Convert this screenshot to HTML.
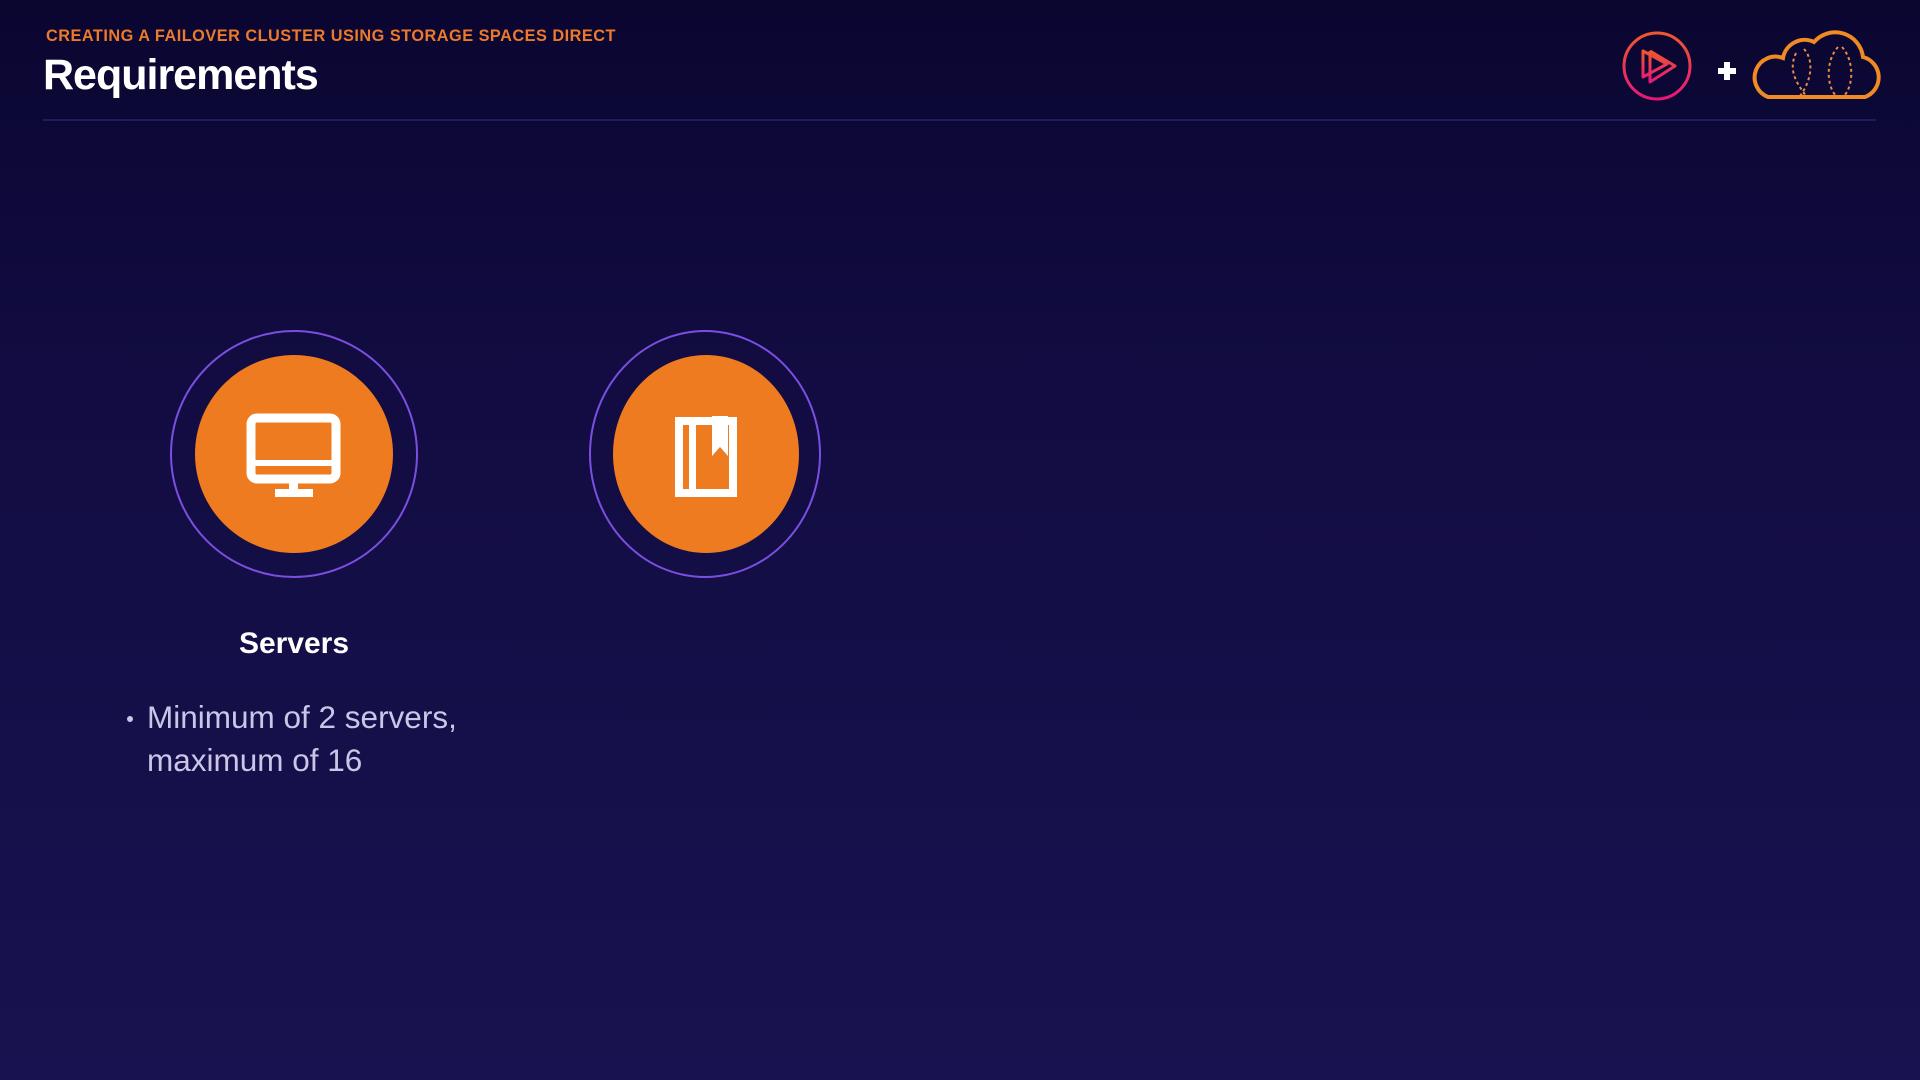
<!DOCTYPE html>
<html><head><meta charset="utf-8"><style>
html,body{margin:0;padding:0}
body{width:1920px;height:1080px;overflow:hidden;position:relative;font-family:"Liberation Sans",sans-serif;background:linear-gradient(180deg,#0a0630 0%,#120c42 35%,#181350 100%)}
.sub{position:absolute;left:46px;top:27px;font-size:16.3px;font-weight:bold;color:#ec7a2a;letter-spacing:0.5px;white-space:nowrap}
.title{position:absolute;left:43px;top:51px;font-size:43px;font-weight:bold;color:#fff;letter-spacing:-1px}
.rule{position:absolute;left:43px;top:119px;width:1833px;height:2px;background:#231c5c}
.ring{position:absolute;border:2px solid #7a4fe0;border-radius:50%;box-sizing:border-box}
.dot{position:absolute;background:#ee7b1f;border-radius:50%}
.h{position:absolute;left:174px;width:240px;text-align:center;top:627px;font-size:30px;font-weight:bold;color:#fff}
.b{position:absolute;left:147px;top:696px;font-size:31.5px;line-height:43px;color:#c9c6e8}
.bd{position:absolute;left:127px;top:716px;width:6px;height:6px;border-radius:50%;background:#c9c6e8}
</style></head><body>
<div class="sub">CREATING A FAILOVER CLUSTER USING STORAGE SPACES DIRECT</div>
<div class="title">Requirements</div>
<div class="rule"></div>

<svg style="position:absolute;left:1620px;top:30px" width="280" height="75" viewBox="0 0 280 75">
<defs><linearGradient id="g" x1="0" y1="0" x2="0" y2="1"><stop offset="0" stop-color="#f0582e"/><stop offset="1" stop-color="#e6177a"/></linearGradient></defs>
<circle cx="37" cy="36" r="33" fill="none" stroke="url(#g)" stroke-width="3"/>
<path d="M23 21 L23 47 L47 34 Z M30 21 L30 52 L55 36 L30 21" fill="none" stroke="url(#g)" stroke-width="3" stroke-linejoin="round"/>
<path d="M98 41 H116 M107 32 V50" stroke="#fff" stroke-width="6"/>
<path d="M148 67 H245 A21 21 0 0 0 243 27 A28 28 0 0 0 194 12 A22 22 0 0 0 163 28 A20 20 0 0 0 148 67 Z" fill="none" stroke="#f08a24" stroke-width="4"/>
<path d="M176 23 C168 40 176 52 186 66 M184 19 C194 30 192 50 180 66 M218 17 C206 30 206 55 216 66 M222 17 C234 30 234 55 224 66" fill="none" stroke="#e88a4a" stroke-width="2" stroke-dasharray="3 3"/>
</svg>

<div class="ring" style="left:170px;top:330px;width:248px;height:248px"></div>
<div class="dot" style="left:195px;top:355px;width:198px;height:198px"></div>
<svg style="position:absolute;left:244px;top:412px" width="100" height="86" viewBox="0 0 100 86">
<rect x="7" y="6" width="85" height="61" rx="6" fill="none" stroke="#fff" stroke-width="9"/>
<rect x="6" y="48" width="87" height="6" fill="#fff"/>
<rect x="45" y="67" width="9" height="12" fill="#fff"/>
<rect x="31" y="77" width="38" height="8" fill="#fff"/>
</svg>

<div class="ring" style="left:589px;top:330px;width:232px;height:248px"></div>
<div class="dot" style="left:613px;top:355px;width:186px;height:198px"></div>
<svg style="position:absolute;left:672px;top:414px" width="70" height="84" viewBox="0 0 70 84">
<path d="M7 7 H61 V79 H7 Z" fill="none" stroke="#fff" stroke-width="8"/>
<rect x="17" y="6" width="7" height="74" fill="#fff"/>
<path d="M40 2 H56 V42 L48 33 L40 42 Z" fill="#fff"/>
</svg>

<div class="h">Servers</div>
<div class="bd"></div>
<div class="b">Minimum of 2 servers,<br>maximum of 16</div>
</body></html>
